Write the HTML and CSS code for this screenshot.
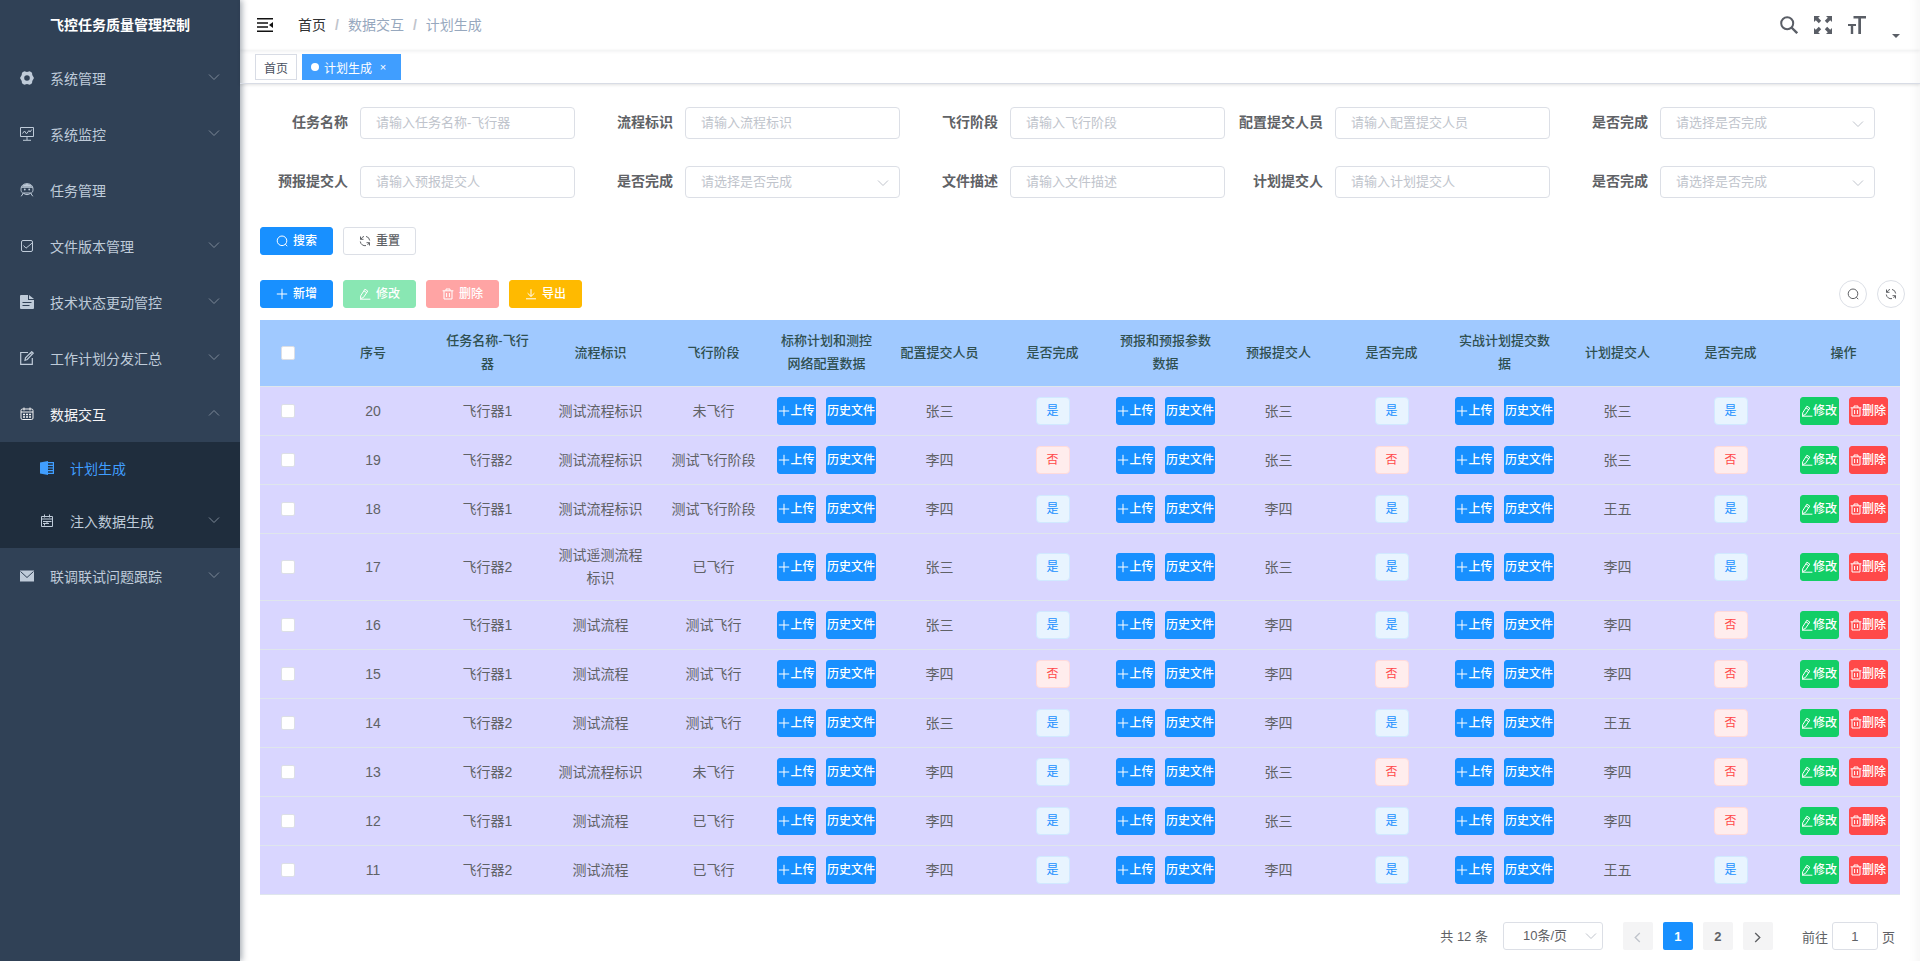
FILE: index.html
```html
<!DOCTYPE html>
<html lang="zh-CN">
<head>
<meta charset="utf-8">
<title>飞控任务质量管理控制</title>
<link rel="stylesheet" href="styles.css">
</head>
<body>
<svg class="sprite" aria-hidden="true">
  <symbol id="i-down" viewBox="0 0 12 12"><path d="M1 3.5 6 8.5l5-5" fill="none" stroke="currentColor"/></symbol>
  <symbol id="i-search" viewBox="0 0 12 12"><circle cx="6" cy="5.8" r="4.8" fill="none" stroke="currentColor"/><path d="m9.3 9.2 1.9 2" fill="none" stroke="currentColor"/></symbol>
  <symbol id="i-refresh" viewBox="0 0 12 12"><path d="M1.500 4.500V1.500M1.500 4.300h3M1.300 6.500A4.700 4.700 0 0 0 7 10.600M2 4.200A4.700 4.700 0 0 1 5 1.400M7 1.400A4.700 4.700 0 0 1 10.700 5.500M10.500 7.500v3M10.500 7.700h-3M10 7.800A4.700 4.700 0 0 1 8.500 9.900" fill="none" stroke="currentColor"/></symbol>
  <symbol id="i-plus" viewBox="0 0 12 12"><path d="M6 .8v10.4M.8 6h10.4" fill="none" stroke="currentColor"/></symbol>
  <symbol id="i-edit" viewBox="0 0 12 12"><path d="M1.7 7.8 5.900 1.200l2.900 1.900-4.400 6.400-2.900 1.200zM4.900 2.800l2.900 1.900M1 11.200h10.400" fill="none" stroke="currentColor"/></symbol>
  <symbol id="i-delete" viewBox="0 0 12 12"><path d="M.6 2.8h10.8M4 2.6V1h4v1.6M2 3v8h8V3M4.6 5v4M7.4 5v4" fill="none" stroke="currentColor"/></symbol>
  <symbol id="i-download" viewBox="0 0 12 12"><path d="M6 1.2v7M2.6 5.2 6 8.5l3.4-3.3M1 10.8h10" fill="none" stroke="currentColor"/></symbol>
</svg>
<div class="app">
  <aside class="sidebar">
    <h1 class="logo">飞控任务质量管理控制</h1>
    <nav class="menu">
      <a class="item" href="#"><svg class="mi" viewBox="0 0 14 14"><path fill="currentColor" fill-rule="evenodd" d="M4.200.2 7 .900 9.800.2l2.200 1.500.3 2.300L14 7l-1.700 3-.3 2.300-2.200 1.500L7 13.100l-2.800.7L2 12.300 1.700 10 0 7l1.700-3L2 1.700zM7 4.200a2.800 2.800 0 1 0 0 5.600 2.800 2.800 0 0 0 0-5.600z"/></svg><span>系统管理</span><svg class="arrow"><use href="#i-down"/></svg></a>
      <a class="item" href="#"><svg class="mi" viewBox="0 0 14 14"><path fill="none" stroke="currentColor" d="M.5.500h13v9H.500zM7 9.500V13M3 13.300h8M2.500 6.500l2-2.500 2 2.800L9 3.500l1 1.500 1.800-2.500"/></svg><span>系统监控</span><svg class="arrow"><use href="#i-down"/></svg></a>
      <a class="item" href="#"><svg class="mi" viewBox="0 0 14 14"><path fill="none" stroke="currentColor" d="M1 6.500C1 2.500 3.500.700 7 .700s6 1.800 6 5.800c0 1.500-.5 2.800-1.500 3.500h-9C1.500 9.300 1 8 1 6.500zM1.500 4.300h11M3.500 10 1.200 13.300M10.500 10l2.300 3.300M4 10.500c1 1.500 5 1.500 6 0"/><circle cx="4.800" cy="6.500" r=".9" fill="currentColor"/><circle cx="9.200" cy="6.500" r=".9" fill="currentColor"/><path fill="currentColor" d="M2 3.800C3 1.700 5 1 7 1s4 .7 5 2.800z"/></svg><span>任务管理</span></a>
      <a class="item" href="#"><svg class="mi" viewBox="0 0 14 14"><rect x="1.500" y="1.500" width="11" height="11" rx="1.500" fill="none" stroke="currentColor"/><path fill="none" stroke="currentColor" d="m3.500 6.500 2.500 2.700 6-5"/></svg><span>文件版本管理</span><svg class="arrow"><use href="#i-down"/></svg></a>
      <a class="item" href="#"><svg class="mi" viewBox="0 0 14 14"><path fill="currentColor" fill-rule="evenodd" d="M1 0h7v5h6v8a1 1 0 0 1-1 1H1a1 1 0 0 1-1-1V1a1 1 0 0 1 1-1zM2.500 7v1h9V7zM2.500 10v1h7v-1zM9 0l5 4H9z"/></svg><span>技术状态更动管控</span><svg class="arrow"><use href="#i-down"/></svg></a>
      <a class="item" href="#"><svg class="mi" viewBox="0 0 14 14"><path fill="none" stroke="currentColor" stroke-width="1.200" d="M8 1.500H.700v11.800h11.600V7M5 9.300l.5-2.500L11.700.700l1.600 1.500-6.100 6.300zM10.300 2l1.600 1.600"/></svg><span>工作计划分发汇总</span><svg class="arrow"><use href="#i-down"/></svg></a>
      <a class="item open" href="#"><svg class="mi" viewBox="0 0 14 14"><rect x="1" y="2" width="12" height="10.500" rx="1.500" fill="none" stroke="currentColor"/><path fill="none" stroke="currentColor" d="M1 5h12M4 .500v3M10 .500v3"/><path fill="none" stroke="currentColor" stroke-width="1.300" stroke-dasharray="2 1" d="M3 7.500h8M3 10h8"/></svg><span>数据交互</span><svg class="arrow"><use href="#i-down"/></svg></a>
      <div class="submenu">
        <a class="item active" href="#"><svg class="mi" viewBox="0 0 14 14"><path fill="currentColor" d="M0 1.500 8 0v14l-8-1.500z"/><path fill="none" stroke="currentColor" stroke-width="1.200" d="M8 1.700h5.400v10.600H8M8 4.300h5.500M8 7h5.500M8 9.700h5.500"/></svg><span>计划生成</span></a>
        <a class="item" href="#"><svg class="mi" viewBox="0 0 14 14"><path fill="none" stroke="currentColor" d="M1.500 2.500h11v10h-11zM1.500 5h11M4.500.500v3M9.500.500v3M3 7.500h8.500M3 9.500h6M4.500 9v2.500M7 7v3"/></svg><span>注入数据生成</span><svg class="arrow"><use href="#i-down"/></svg></a>
      </div>
      <a class="item" href="#"><svg class="mi" viewBox="0 0 14 14"><path fill="currentColor" d="M0 1.500h14v11H0z"/><path fill="none" stroke="#304156" d="m.5 2.500 6.500 6 6.500-6"/></svg><span>联调联试问题跟踪</span><svg class="arrow"><use href="#i-down"/></svg></a>
    </nav>
  </aside>
  <div class="page">
    <header class="navbar">
      <button class="plain" type="button" aria-label="折叠菜单"><svg class="burger" viewBox="0 0 16 14"><path fill="none" stroke="currentColor" stroke-width="1.500" d="M0 .75h16M0 5h11M0 9h11M0 13.250h16"/><path fill="currentColor" d="M16 4v6l-4-3z"/></svg></button>
      <nav class="crumbs"><a href="#">首页</a><i>/</i><span>数据交互</span><i>/</i><span>计划生成</span></nav>
      <div class="tools">
        <button class="plain" type="button" aria-label="搜索"><svg class="tool" viewBox="0 0 18 18"><circle cx="7.200" cy="7.200" r="6" fill="none" stroke="currentColor" stroke-width="2"/><path d="m11.500 11.500 5.700 5.700" stroke="currentColor" stroke-width="2.400"/></svg></button>
        <button class="plain" type="button" aria-label="全屏"><svg class="tool" viewBox="0 0 18 18"><path fill="currentColor" d="M0 0h6L4.200 1.800l3 3-2.400 2.400-3-3L0 6zM18 0v6l-1.800-1.800-3 3-2.400-2.400 3-3L12 0zM0 18v-6l1.800 1.800 3-3 2.400 2.400-3 3L6 18zM18 18h-6l1.800-1.800-3-3 2.400-2.400 3 3L18 12z"/></svg></button>
        <button class="plain" type="button" aria-label="字号"><svg class="tool" viewBox="0 0 18 18"><path fill="currentColor" d="M5.500 0H18v2.500h-5V18h-2.700V2.500H5.500zM0 8h8v2H5.200v8H2.800v-8H0z"/></svg></button>
        <button class="plain user" type="button" aria-label="用户"><svg class="caret" viewBox="0 0 8 4"><path fill="currentColor" d="M0 0h8L4 4z"/></svg></button>
      </div>
    </header>
    <nav class="tags"><a href="#">首页</a><a class="on" href="#"><b class="dot"></b>计划生成<span class="x">×</span></a></nav>
    <main class="main">
      <form class="filters" id="filters"></form>
      <div class="bar">
        <button class="btn primary" type="button"><svg><use href="#i-search"/></svg>搜索</button>
        <button class="btn" type="button"><svg><use href="#i-refresh"/></svg>重置</button>
      </div>
      <div class="bar">
        <button class="btn primary" type="button"><svg><use href="#i-plus"/></svg>新增</button>
        <button class="btn success" type="button" disabled><svg><use href="#i-edit"/></svg>修改</button>
        <button class="btn danger" type="button" disabled><svg><use href="#i-delete"/></svg>删除</button>
        <button class="btn warning" type="button"><svg><use href="#i-download"/></svg>导出</button>
        <div class="round-tools">
          <button class="btn round" type="button" aria-label="显示搜索"><svg><use href="#i-search"/></svg></button>
          <button class="btn round" type="button" aria-label="刷新"><svg><use href="#i-refresh"/></svg></button>
        </div>
      </div>
      <table class="grid">
        <thead><tr>
          <th class="pick"><input type="checkbox" aria-label="全选"></th>
          <th class="seq">序号</th><th>任务名称-飞行器</th><th>流程标识</th><th>飞行阶段</th><th>标称计划和测控网络配置数据</th><th>配置提交人员</th><th>是否完成</th><th>预报和预报参数数据</th><th>预报提交人</th><th>是否完成</th><th>实战计划提交数据</th><th>计划提交人</th><th>是否完成</th><th>操作</th>
        </tr></thead>
        <tbody id="rows"></tbody>
      </table>
      <div class="pager">
        <span class="total">共 12 条</span>
        <span class="pick-box size"><select aria-label="每页条数"><option>10条/页</option></select><svg><use href="#i-down"/></svg></span>
        <div class="pages">
          <button type="button" aria-label="上一页" disabled><svg class="prev"><use href="#i-down"/></svg></button>
          <button type="button" class="on">1</button>
          <button type="button">2</button>
          <button type="button" aria-label="下一页"><svg class="next"><use href="#i-down"/></svg></button>
        </div>
        <label class="jump">前往<input type="text" value="1">页</label>
      </div>
    </main>
  </div>
</div>
<script src="app.js"></script>
</body>
</html>
```
FILE: styles.css
```css
* { box-sizing: border-box; }
body {
  margin: 0;
  font-family: "Liberation Sans", "Noto Sans CJK SC", sans-serif;
  font-size: 14px;
  color: #606266;
  background: #fff;
}
a { color: inherit; text-decoration: none; }
button, input, select { font-family: inherit; }
.sprite { position: absolute; width: 0; height: 0; }
.app { display: flex; min-height: 100vh; box-shadow: inset -12px 0 12px -10px rgba(0, 0, 0, .05); }

.sidebar {
  flex: 0 0 240px;
  background: #304156;
  box-shadow: 2px 0 6px rgba(0, 21, 41, .35);
  color: #bfcbd9;
}
.logo {
  margin: 0;
  font-size: 14px;
  line-height: 50px;
  color: #fff;
  text-align: center;
}
.item {
  display: flex;
  align-items: center;
  height: 56px;
  padding: 0 20px;
}
.item span { flex: 1; }
.mi { width: 14px; height: 14px; margin-right: 16px; }
.arrow { width: 12px; height: 12px; color: #7d8998; margin-bottom: 2px; }
.open { color: #f4f4f5; }
.open .arrow { transform: rotate(180deg); }
.submenu { background: #1f2d3d; }
.submenu .item { height: 53px; padding: 0 20px 2px 40px; }
.submenu .active { color: #409eff; }

.page { flex: 1; min-width: 0; }
.plain { padding: 0; border: 0; background: none; color: #5a5e66; line-height: 0; }
.navbar {
  display: flex;
  align-items: center;
  height: 50px;
  padding: 0 20px 0 17px;
  box-shadow: 0 1px 4px rgba(0, 21, 41, .08);
}
.burger { width: 16px; height: 14px; color: #111; }
.crumbs { display: flex; align-items: baseline; margin-left: 25px; padding-bottom: 2px; color: #97a8be; }
.crumbs a { color: #303133; }
.crumbs i { margin: 0 9px; font-style: normal; font-weight: 700; color: #c0c4cc; }
.tools { display: flex; gap: 16px; margin-left: auto; }
.tool { width: 18px; height: 18px; }
.user { display: flex; align-items: flex-end; justify-content: flex-end; width: 18px; }
.caret { width: 8px; height: 4px; margin-bottom: -4px; }

.tags {
  display: flex;
  gap: 5px;
  height: 34px;
  padding: 4px 15px;
  border-bottom: 1px solid #d8dce5;
  box-shadow: 0 1px 3px rgba(0, 0, 0, .12);
}
.tags a {
  display: flex;
  align-items: center;
  height: 26px;
  padding: 0 8px;
  border: 1px solid #d8dce5;
  font-size: 12px;
  color: #495060;
}
.tags .on { border-color: #409eff; background: #409eff; color: #fff; }
.dot { width: 8px; height: 8px; margin-right: 5px; border-radius: 50%; background: #fff; }
.x { width: 14px; margin: 0 2px 0 4px; text-align: center; font-size: 11px; }

.main { padding: 23px 20px 10px; }
.filters { display: flex; flex-wrap: wrap; gap: 27px 10px; margin-bottom: 29px; }
.field { display: flex; width: 315px; align-items: center; }
.field label { width: 100px; padding: 0 12px 2px 0; text-align: right; font-weight: 700; line-height: 20px; }
.field input, .pick-box select {
  width: 100%;
  height: 32px;
  padding: 0 15px 2px;
  border: 1px solid #dcdfe6;
  border-radius: 4px;
  background: #fff;
  font-size: 13px;
  color: #606266;
  appearance: none;
}
.field input { width: 215px; }
.field input::placeholder, .field select { color: #c0c4cc; }
.pick-box { display: grid; width: 215px; align-items: center; }
.pick-box > * { grid-area: 1 / 1; }
.pick-box svg { width: 12px; height: 12px; margin: 2px 11px 0 0; justify-self: end; color: #c0c4cc; pointer-events: none; }

.bar { display: flex; gap: 10px; margin-bottom: 25px; }
.btn {
  display: inline-flex;
  align-items: center;
  justify-content: center;
  gap: 5px;
  height: 28px;
  padding: 0 15px;
  border: 1px solid #dcdfe6;
  border-radius: 3px;
  background: #fff;
  color: #606266;
  font-size: 12px;
  font-weight: 500;
  line-height: 14px;
  white-space: nowrap;
}
.btn svg { width: 12px; height: 12px; }
.primary { background: #1890ff; border-color: #1890ff; color: #fff; }
.success { background: #13ce66; border-color: #13ce66; color: #fff; }
.danger { background: #ff4949; border-color: #ff4949; color: #fff; }
.warning { background: #ffba00; border-color: #ffba00; color: #fff; }
.success:disabled { background: #89e7b3; border-color: #89e7b3; }
.danger:disabled { background: #ffa4a4; border-color: #ffa4a4; }
.round-tools { display: flex; gap: 10px; margin: 0 -5px 0 auto; }
.round { width: 28px; padding: 0; border-radius: 50%; }
.bar + .grid { margin-top: -13px; }

.grid { width: 100%; table-layout: fixed; border-collapse: separate; border-spacing: 0; background: #d9d6ff; }
.grid th, .grid td { padding: 10px 0; border-bottom: 1px solid #dfe6ec; text-align: center; line-height: 23px; }
.grid th { padding: 9px 10px 11px; background: #a0c9ff; color: #2f4f4f; font-size: 13px; font-weight: 500; }
.grid .pick { width: 55px; padding: 0; }
.grid .seq { width: 116px; }
.grid .text { padding: 10px; }
.grid input { display: block; width: 14px; height: 14px; margin: 0 auto; appearance: none; background: #fff; border: 1px solid #dcdfe6; border-radius: 2px; }
.pair { display: flex; justify-content: center; gap: 10px; }
.pair .btn { gap: 0; padding: 0; width: 39px; }
.pair .file { width: 50px; }
.tag {
  display: block;
  width: 34px;
  height: 28px;
  margin: 0 auto;
  border: 1px solid #d1e9ff;
  border-radius: 4px;
  background: #e8f4ff;
  color: #1890ff;
  font-size: 12px;
  line-height: 26px;
}
.tag.no { background: #ffeded; border-color: #ffdbdb; color: #ff4949; }

.pager { display: flex; align-items: center; justify-content: flex-end; margin-top: 27px; padding-right: 5px; font-size: 13px; }
.total { padding-bottom: 2px; }
.pager .size { width: 100px; margin: 0 20px 0 15px; }
.pager select { height: 28px; border-radius: 3px; padding: 0 19px 2px; }
.pager .size svg { margin: 0 6px 0 0; }
.pages { display: flex; gap: 10px; }
.pages button { width: 30px; height: 28px; padding: 0; border: 0; border-radius: 2px; background: #f4f4f5; color: #606266; font-size: 13px; font-weight: 700; }
.pages .on { background: #1890ff; color: #fff; }
.pages button:disabled { color: #c0c4cc; }
.pages svg { width: 11px; height: 11px; vertical-align: middle; stroke-width: 1.5; }
.prev { transform: rotate(90deg); }
.next { transform: rotate(-90deg); }
.jump { display: flex; align-items: center; margin-left: 29px; }
.jump input { width: 46px; height: 28px; margin: 0 4px; padding: 0; border: 1px solid #dcdfe6; border-radius: 3px; text-align: center; font-size: 13px; color: #606266; }
```
FILE: app.js
```js
const fields = [
  ['任务名称', '请输入任务名称-飞行器'],
  ['流程标识', '请输入流程标识'],
  ['飞行阶段', '请输入飞行阶段'],
  ['配置提交人员', '请输入配置提交人员'],
  ['是否完成', '请选择是否完成', true],
  ['预报提交人', '请输入预报提交人'],
  ['是否完成', '请选择是否完成', true],
  ['文件描述', '请输入文件描述'],
  ['计划提交人', '请输入计划提交人'],
  ['是否完成', '请选择是否完成', true]
];

document.getElementById('filters').innerHTML = fields.map(([label, hint, select], i) => {
  const control = select
    ? `<span class="pick-box"><select id="f${i}"><option>${hint}</option></select><svg><use href="#i-down"/></svg></span>`
    : `<input id="f${i}" type="text" placeholder="${hint}">`;
  return `<div class="field"><label for="f${i}">${label}</label>${control}</div>`;
}).join('');

// id, craft, flow, stage, then submitter and done flag for each of the three files
const records = [
  [20, '飞行器1', '测试流程标识', '未飞行', '张三', 1, '张三', 1, '张三', 1],
  [19, '飞行器2', '测试流程标识', '测试飞行阶段', '李四', 0, '张三', 0, '张三', 0],
  [18, '飞行器1', '测试流程标识', '测试飞行阶段', '李四', 1, '李四', 1, '王五', 1],
  [17, '飞行器2', '测试遥测流程标识', '已飞行', '张三', 1, '张三', 1, '李四', 1],
  [16, '飞行器1', '测试流程', '测试飞行', '张三', 1, '李四', 1, '李四', 0],
  [15, '飞行器1', '测试流程', '测试飞行', '李四', 0, '李四', 0, '李四', 0],
  [14, '飞行器2', '测试流程', '测试飞行', '张三', 1, '李四', 1, '王五', 0],
  [13, '飞行器2', '测试流程标识', '未飞行', '李四', 1, '张三', 0, '李四', 0],
  [12, '飞行器1', '测试流程', '已飞行', '李四', 1, '张三', 1, '李四', 0],
  [11, '飞行器2', '测试流程', '已飞行', '李四', 1, '李四', 1, '王五', 1]
];

const icon = name => `<svg><use href="#i-${name}"/></svg>`;
const text = value => `<td class="text">${value}</td>`;
const tag = done => `<td><span class="tag${done ? '' : ' no'}">${done ? '是' : '否'}</span></td>`;
const files = `<td><div class="pair"><button type="button" class="btn primary">${icon('plus')}上传</button><button type="button" class="btn primary file">历史文件</button></div></td>`;
const actions = `<td><div class="pair"><button type="button" class="btn success">${icon('edit')}修改</button><button type="button" class="btn danger">${icon('delete')}删除</button></div></td>`;

document.getElementById('rows').innerHTML = records.map(r =>
  `<tr><td class="pick"><input type="checkbox" aria-label="选择 ${r[0]}"></td>` +
  r.slice(0, 4).map(text).join('') +
  [4, 6, 8].map(i => files + text(r[i]) + tag(r[i + 1])).join('') +
  actions + '</tr>'
).join('');
```
